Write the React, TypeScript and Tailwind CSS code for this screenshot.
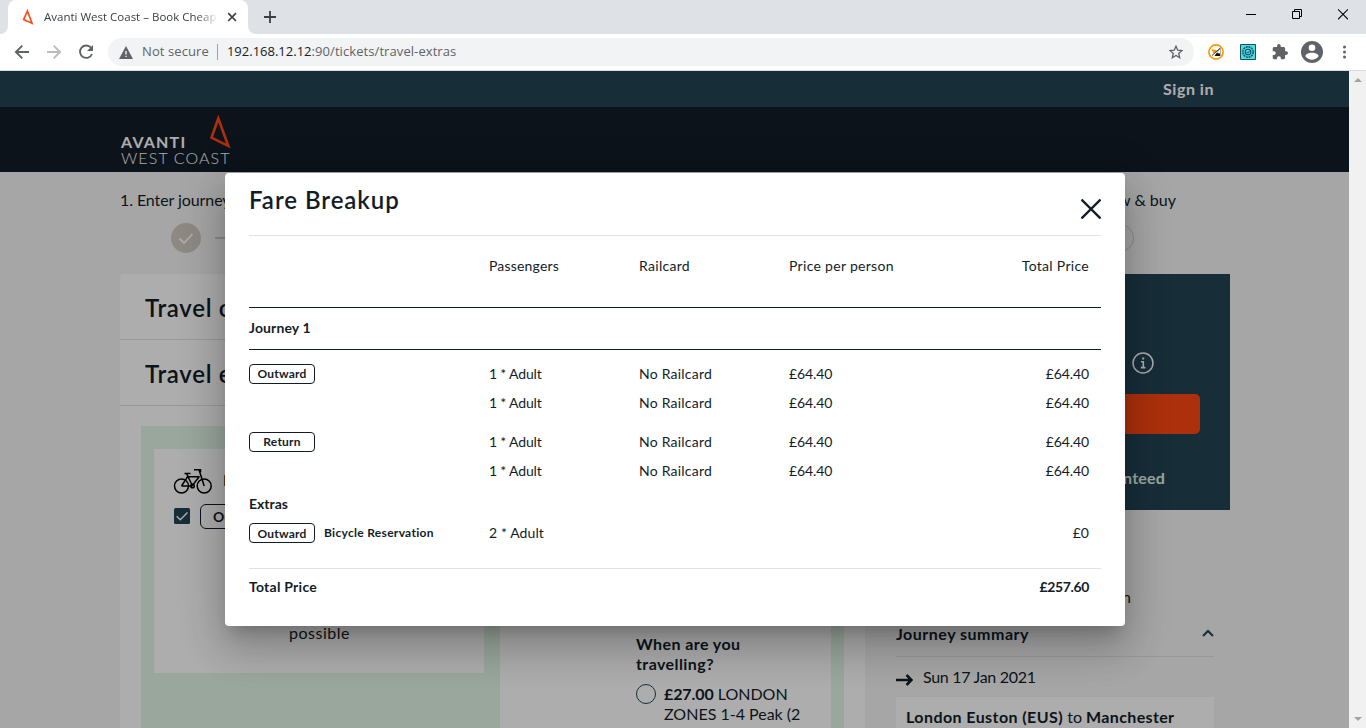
import type { ReactNode } from "react";

function BrowserChrome() {
  return (
    <header className="flex h-[71px] shrink-0 flex-col border-b border-[#dadce0] bg-white font-['Open_Sans',sans-serif]">
      <div className="flex h-[34px] bg-[#dee1e6]">
        <div className="flex w-2 items-end bg-white">
          <div className="h-full w-full rounded-br-lg bg-[#dee1e6]" />
        </div>
        <div className="flex w-60 items-center rounded-t-lg bg-white pr-2 pl-3">
          <svg width="16" height="16" viewBox="0 0 16 16" fill="none" stroke="#f4511e" strokeWidth="1.7">
            <path d="M7.4 2 L3.6 10.6 L12 14.2 Z" />
          </svg>
          <div className="ml-2 w-[174px] overflow-hidden text-[11.5px] whitespace-nowrap text-[#3c4043] [mask-image:linear-gradient(to_right,#000_88%,transparent)]">
            Avanti West Coast – Book Cheap
          </div>
          <svg className="ml-auto" width="16" height="16" viewBox="0 0 16 16" stroke="#3c4043" strokeWidth="1.7">
            <path d="M4.2 4.2l7.8 7.8M12 4.2l-7.8 7.8" />
          </svg>
        </div>
        <div className="w-2 bg-white">
          <div className="h-full w-full rounded-bl-lg bg-[#dee1e6]" />
        </div>
        <svg className="mt-[11px] ml-2" width="12" height="12" viewBox="0 0 12 12" stroke="#3c4043" strokeWidth="1.8">
          <path d="M6 0v12M0 6h12" />
        </svg>
        <div className="mt-2 ml-auto flex h-3 items-start gap-9 pr-[18px]">
          <svg width="10" height="12" viewBox="0 0 10 12" fill="#000">
            <path d="M0 6h10v1H0z" />
          </svg>
          <svg width="10" height="12" viewBox="0 0 10 12" fill="none" stroke="#000">
            <path d="M.5 3.5h7v7h-7zM2.5 3.5v-2h7v7h-2" />
          </svg>
          <svg width="10" height="12" viewBox="0 0 10 12" fill="none" stroke="#000" strokeWidth="1.1">
            <path d="M0 1.3l10 10M10 1.3l-10 10" />
          </svg>
        </div>
      </div>
      <div className="flex h-9 items-center pr-5 pl-[14px]">
        <svg width="80" height="18" viewBox="0 0 80 18" fill="none" strokeWidth="1.9">
          <path d="M15 9H2M8.3 2.6L1.9 9l6.4 6.4" stroke="#5f6368" />
          <path d="M33 9h13M39.7 2.6L46.1 9l-6.4 6.4" stroke="#babcbe" />
          <path d="M77 4.7A6.2 6.2 0 1 0 78 11" stroke="#5f6368" />
          <path d="M79 2v6h-6z" fill="#5f6368" />
        </svg>
        <div className="ml-[14px] flex h-7 flex-1 items-center rounded-full bg-[#f1f3f4] pr-[11px] pl-[11px] text-[13px]">
          <svg width="14" height="13" viewBox="0 0 14 13" fill="#5f6368">
            <path fillRule="evenodd" d="M7 0l7 13H0zM6.3 5v3.5h1.4V5zM6.3 9.7v1.4h1.4V9.7z" />
          </svg>
          <span className="ml-[9px] tracking-[.1px] text-[#5f6368]">Not secure</span>
          <span className="mr-[9px] ml-2 h-4 w-px bg-[#9aa0a6]" />
          <span className="text-[#202124]">192.168.12.12</span>
          <span className="tracking-[.08px] text-[#5f6368]">:90/tickets/travel-extras</span>
          <svg className="ml-auto" width="14" height="14" viewBox="0 0 14 14" fill="none" stroke="#5f6368" strokeWidth="1.3">
            <path d="M7 1.2l1.7 4 4.3.4-3.3 2.8 1 4.3L7 10.4l-3.7 2.3 1-4.3L1 5.6l4.3-.4z" />
          </svg>
        </div>
        <svg className="ml-[14px]" width="16" height="16" viewBox="0 0 16 16" fill="none">
          <circle cx="8" cy="8" r="7.1" stroke="#ff9800" strokeWidth="1.7" />
          <path d="M12.300 3.800L12.300 12H6.500L8.600 9z" fill="#111" />
          <path d="M12 4.500L9 9l3 .5z" fill="#fff" />
          <path d="M3.200 5.200l4.500.6L10 7.500 5.500 9.200z" fill="#ff9800" />
          <path d="M12.300 4L4 11.500" stroke="#444" />
        </svg>
        <svg className="ml-4" width="16" height="16" viewBox="0 0 16 16" fill="none" stroke="#12505c">
          <path d="M.5.5h15v15H.5z" fill="#4dd9e6" />
          <circle cx="8" cy="8" r="5.2" strokeWidth="1.4" strokeDasharray="2 .7" />
          <circle cx="8" cy="8" r="2.8" strokeWidth="1.1" />
          <path d="M6.6 8l1 1.2L9.8 6.8" />
        </svg>
        <svg className="ml-4" width="16" height="16" viewBox="1 1 22 22" fill="#5f6368">
          <path d="M20.5 11H19V7c0-1.1-.9-2-2-2h-4V3.500a2.500 2.500 0 0 0-5 0V5H4c-1.100 0-2 .9-2 2v3.800h1.500a2.700 2.700 0 0 1 0 5.400H2V20c0 1.100.9 2 2 2h3.800v-1.500a2.700 2.700 0 0 1 5.400 0V22H17c1.100 0 2-.9 2-2v-4h1.500a2.500 2.500 0 0 0 0-5z" />
        </svg>
        <svg className="ml-[13px]" width="22" height="22" viewBox="0 0 22 22">
          <circle cx="11" cy="11" r="11" fill="#5f6368" />
          <circle cx="11" cy="6.800" r="3.300" fill="#fff" />
          <path d="M4.400 15.300c0-4.800 13.200-4.800 13.200 0a8 8 0 0 1-13.200 0z" fill="#fff" />
        </svg>
        <svg className="ml-[19px]" width="4" height="14" viewBox="0 0 4 14" fill="#5f6368">
          <circle cx="2.500" cy="2" r="1.500" />
          <circle cx="2.500" cy="7" r="1.500" />
          <circle cx="2.500" cy="12" r="1.500" />
        </svg>
      </div>
    </header>
  );
}

function BikeCard() {
  return (
    <div className="flex h-56 w-[330px] shrink-0 flex-col bg-white">
      <div className="flex items-center gap-[10px] pt-[17px] pl-[19px]">
        <svg width="40" height="28" viewBox="0 0 40 28" fill="none" stroke="#000" strokeWidth="1.500">
          <circle cx="8.500" cy="20" r="7" />
          <circle cx="31.200" cy="20" r="7" />
          <path d="M8.500 20h10.500L26.500 10.300M8.500 20l6.300-9.600M13.500 7.500l6 12.500M14.500 10.700h12M31.200 20L26 3.800h-5M26 3.800h1.500v2.500M11.500 7.500h6" />
          <circle cx="19.500" cy="20" r="1.800" />
        </svg>
        <span className="text-base font-bold">Bicycle</span>
      </div>
      <div className="mt-[10px] flex items-center gap-[10px] pl-5">
        <svg className="mb-px" width="16" height="16" viewBox="0 0 16 16" fill="none">
          <rect width="16" height="16" rx="1.500" fill="#234555" />
          <path d="M2.700 8.200l3.600 3.600 7.200-7.300" stroke="#fff" strokeWidth="1.400" />
        </svg>
        <span className="flex h-[25px] w-20 items-center rounded-[6px] border border-[#131d28] px-3 text-[14px] font-bold">Out</span>
      </div>
      <p className="mt-auto pb-7 pl-px text-center tracking-[.5px]">possible</p>
    </div>
  );
}

function ZoneCard() {
  return (
    <div className="flex w-[331px] shrink-0 flex-col bg-white pt-[185px] pl-[136px] leading-5">
      <p className="w-32 font-bold tracking-[.42px]">When are you travelling?</p>
      <div className="mt-[9px] flex">
        <svg className="mt-px mr-2" width="20" height="20" viewBox="0 0 20 20" fill="none" stroke="#234555">
          <circle cx="10" cy="10" r="9.500" />
        </svg>
        <p className="pt-px whitespace-nowrap">
          <b className="tracking-[-.1px]">£27.00</b> LONDON
          <br />
          ZONES 1-4 Peak (2
        </p>
      </div>
    </div>
  );
}

function Sidebar() {
  return (
    <aside className="flex w-[350px] flex-col">
      <div className="flex h-[236px] flex-col items-end bg-[#234555] pr-[30px] text-white">
        <svg className="mt-[78px] mr-[46px]" width="22" height="22" viewBox="0 0 22 22" fill="none" stroke="#fff">
          <circle cx="11" cy="11" r="10" strokeWidth="1.500" />
          <path d="M9 9.800h2.300v5.500M8.800 15.600h4.600" strokeWidth="1.600" />
          <path d="M10.200 5.500h2v2h-2z" fill="#fff" stroke="none" />
        </svg>
        <div className="mt-5 h-10 w-[290px] rounded-[5px] bg-[#ff4713]" />
        <span className="mt-8 mr-[35px] font-bold tracking-[.2px] text-[#e2f7e8]">guaranteed</span>
      </div>
      <div className="flex flex-col pr-4 pl-4">
        <span className="mt-[75px] mr-[83px] text-right">Plan</span>
        <div className="flex h-12 items-end justify-between border-b border-[#e2e2e2] pb-[10px]">
          <b className="tracking-[.5px]">Journey summary</b>
          <svg className="mb-[9px]" width="12" height="8" viewBox="0 0 12 8" fill="none" stroke="#234555" strokeWidth="2">
            <path d="M1 7l5-5 5 5" />
          </svg>
        </div>
        <div className="flex h-10 items-center gap-[10px] tracking-[-.3px]">
          <svg className="mt-[5px]" width="17" height="12" viewBox="0 0 17 12" fill="none" stroke="#131d28" strokeWidth="2.500">
            <path d="M0 6h15M10.500 1l5 5-5 5" />
          </svg>
          <span className="mb-px">Sun 17 Jan 2021</span>
        </div>
        <div className="h-16 bg-white pt-2 pl-[10px]">
          <b className="tracking-[.43px]">London Euston (EUS)</b> to <b className="tracking-[.36px]">Manchester</b>
        </div>
      </div>
    </aside>
  );
}

function Site() {
  return (
    <div className="flex w-full flex-col bg-[#f5f5f5] text-[#131d28]">
      <div className="flex h-9 shrink-0 items-center justify-end bg-[#234555] pr-[135px] font-bold tracking-[.53px] text-white">Sign in</div>
      <div className="flex h-[65px] shrink-0 bg-[#131d28] pl-[120px]">
        <div className="flex w-[111px] flex-col justify-end pb-[6px] pl-px leading-4 whitespace-nowrap text-white">
          <div className="flex items-end justify-between">
            <b className="tracking-[1.2px]">AVANTI</b>
            <svg className="mb-px" width="22" height="34" viewBox="0 0 22 34" fill="none" stroke="#ff4713" strokeWidth="2.600">
              <path d="M9.300 3.500L2.500 22.700 19.300 31Z" />
            </svg>
          </div>
          <span className="font-light tracking-[1.1px]">WEST COAST</span>
        </div>
      </div>
      <div className="flex shrink-0 flex-col px-[120px]">
        <div className="flex h-[102px] w-[1110px] shrink-0 flex-col">
          <div className="flex justify-between pt-4 pr-[54px]">
            <span className="tracking-[-.08px]">1. Enter journey</span>
            <span>5. Review &amp; buy</span>
          </div>
          <div className="mt-[11px] flex items-center justify-between pr-24 pl-[51px]">
            <svg width="60" height="30" viewBox="0 0 60 30" fill="none">
              <circle cx="15" cy="15" r="15" fill="#d1cbc2" />
              <path d="M8.500 15.500l4.500 4.500 8.500-9" stroke="#fff" strokeWidth="1.800" />
              <path d="M44 15h16" stroke="#d1cbc2" strokeWidth="2" />
            </svg>
            <span className="h-[28px] w-[28px] rounded-full border border-[#d1cbc2]" />
          </div>
        </div>
        <div className="flex w-[1110px] justify-between">
          <section className="flex w-[745px] flex-col rounded-t-[4px] bg-white">
            <h2 className="flex h-[66px] items-center border-b border-[#e2e2e2] pt-[3px] pl-[25px] text-2xl font-semibold tracking-[.7px]">Travel options</h2>
            <h2 className="flex h-[66px] items-center border-b border-[#e2e2e2] pt-[3px] pl-[25px] text-2xl font-semibold tracking-[.7px]">Travel extras</h2>
            <div className="mt-5 ml-[21px] flex h-[400px] w-[703px] gap-4 bg-[#e2f7e8] pt-[23px] pl-[13px]">
              <BikeCard />
              <ZoneCard />
            </div>
          </section>
          <Sidebar />
        </div>
      </div>
    </div>
  );
}

function Badge({ children }: { children: ReactNode }) {
  return (
    <span className="flex h-5 w-[66px] shrink-0 items-center justify-center rounded-[4px] border border-[#131d28] pt-px text-[12px] font-bold tracking-[.2px]">
      {children}
    </span>
  );
}

const grid = "grid shrink-0 grid-cols-[240px_150px_150px_1fr] items-center pr-3";

function FareRow({ label }: { label?: string }) {
  return (
    <div className={`${grid} h-[29px]`}>
      <span>{label && <Badge>{label}</Badge>}</span>
      <span className="tracking-[-.17px]">1 * Adult</span>
      <span className="tracking-[.22px]">No Railcard</span>
      <span className="flex justify-between tracking-[-.12px]">
        <span>£64.40</span>
        <span>£64.40</span>
      </span>
    </div>
  );
}

function FareDialog() {
  return (
    <div
      role="dialog"
      className="ml-px flex h-[453px] w-[900px] flex-col rounded-[4px] bg-white px-6 text-[14px] leading-5 text-[#131d28] shadow-[0_11px_15px_-7px_rgba(0,0,0,.2),0_24px_38px_3px_rgba(0,0,0,.14),0_9px_46px_8px_rgba(0,0,0,.12)]"
    >
      <div className="flex h-[63px] shrink-0 items-start justify-between border-b border-[#e2e2e2]">
        <h1 className="pt-[11px] text-2xl font-semibold tracking-[.95px]">Fare Breakup</h1>
        <svg className="mt-[26px]" width="20" height="20" viewBox="0 0 20 20" stroke="#131d28" strokeWidth="2.300">
          <path d="M.5.5l19 19M19.500.5l-19 19" />
        </svg>
      </div>
      <div className="grid h-[72px] shrink-0 grid-cols-[240px_150px_150px_1fr] border-b border-[#131d28] pt-5 pr-3">
        <span />
        <span className="tracking-[.19px]">Passengers</span>
        <span className="tracking-[.3px]">Railcard</span>
        <span className="flex justify-between tracking-[.3px]">
          <span>Price per person</span>
          <span>Total Price</span>
        </span>
      </div>
      <div className="flex h-[42px] shrink-0 items-center border-b border-[#131d28] pb-px font-bold tracking-[.11px]">Journey 1</div>
      <div className="pt-[9px]">
        <FareRow label="Outward" />
        <FareRow />
      </div>
      <div className="pt-[10px]">
        <FareRow label="Return" />
        <FareRow />
      </div>
      <div className="flex h-[37px] shrink-0 items-center font-bold">Extras</div>
      <div className={`${grid} h-[22px]`}>
        <span className="flex items-center gap-[9px]">
          <Badge>Outward</Badge>
          <span className="text-[12px] font-bold tracking-[.3px]">Bicycle Reservation</span>
        </span>
        <span className="tracking-[.1px]">2 * Adult</span>
        <span />
        <span className="text-right">£0</span>
      </div>
      <div className="mt-6 flex h-[37px] shrink-0 items-center justify-between border-t border-[#e2e2e2] pr-3 font-bold">
        <span className="tracking-[.25px]">Total Price</span>
        <span className="tracking-[-.35px]">£257.60</span>
      </div>
    </div>
  );
}

export default function App() {
  return (
    <div className="flex h-[728px] w-[1366px] flex-col overflow-hidden">
      <BrowserChrome />
      <div className="flex h-[657px]">
        <main className="relative flex w-[1349px] overflow-hidden font-['Lato',sans-serif] text-base">
          <Site />
          <div className="absolute inset-0 flex items-center justify-center bg-black/32">
            <FareDialog />
          </div>
        </main>
        <div className="flex w-[17px] flex-col items-center justify-between bg-[#f1f1f1] py-[7px]">
          <svg width="8" height="4" viewBox="0 0 8 4" fill="#a3a3a3">
            <path d="M4 0l4 4H0z" />
          </svg>
          <svg width="8" height="4" viewBox="0 0 8 4" fill="#a3a3a3">
            <path d="M0 0h8L4 4z" />
          </svg>
        </div>
      </div>
    </div>
  );
}
